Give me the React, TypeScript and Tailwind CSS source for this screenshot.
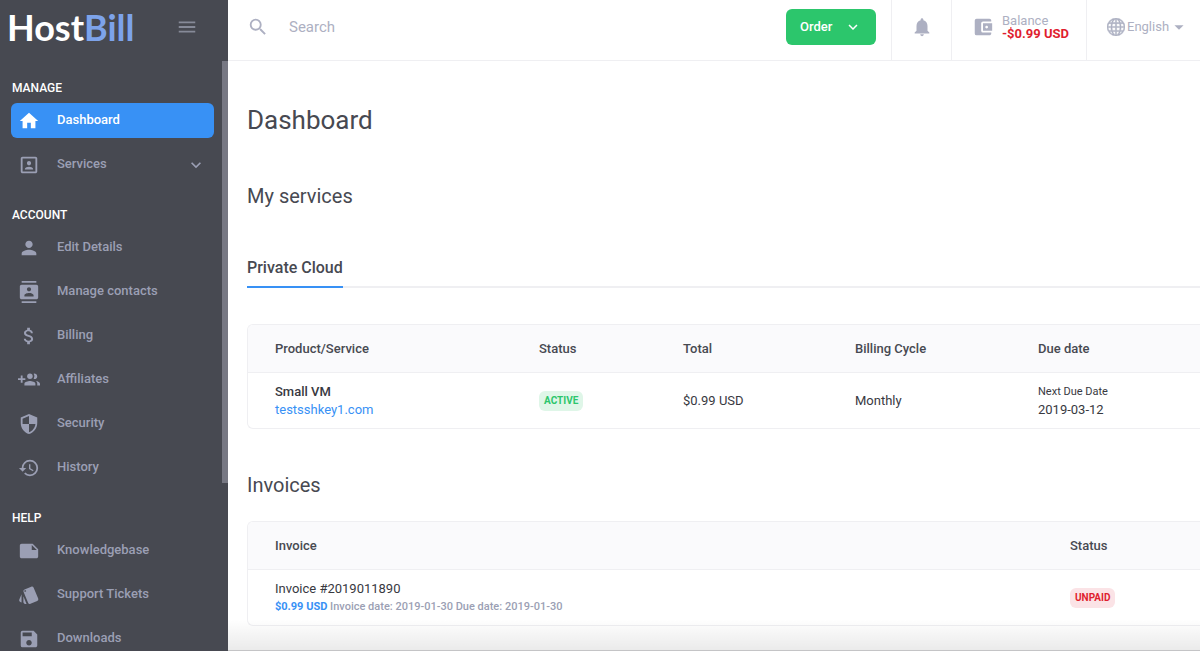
import React from 'react';
import type { IconType } from 'react-icons';
import {
  MdAccountBalanceWallet,
  MdArrowDropDown,
  MdAttachMoney,
  MdContacts,
  MdExpandMore,
  MdHistory,
  MdHome,
  MdMenu,
  MdNote,
  MdNotifications,
  MdPerson,
  MdPortrait,
  MdSave,
  MdSearch,
  MdSecurity,
  MdStyle,
} from 'react-icons/md';
import { BsGlobe } from 'react-icons/bs';

type NavItem = {
  label: string;
  icon: IconType | React.FC<{ className?: string }>;
  active?: boolean;
  expandable?: boolean;
};

// group icon with the plus sign on the left side
const GroupPlus = ({ className }: { className?: string }) => (
  <svg viewBox="0 0 24 24" fill="currentColor" className={className} aria-hidden="true">
    <path d="M8 10H5V7H3v3H0v2h3v3h2v-3h3z" />
    <circle cx="13" cy="8" r="3" />
    <path d="M18 11a3 3 0 1 0-.9-5.86 5 5 0 0 1 0 5.72c.28.09.58.14.9.14z" />
    <path d="M13 13c-2 0-6 1-6 3v2h12v-2c0-2-4-3-6-3z" />
    <path d="M19.62 13.16c.83.73 1.38 1.66 1.38 2.84v2h3v-2c0-1.54-2.37-2.49-4.38-2.84z" />
  </svg>
);

const navGroups: { title: string; items: NavItem[] }[] = [
  {
    title: 'MANAGE',
    items: [
      { label: 'Dashboard', icon: MdHome, active: true },
      { label: 'Services', icon: MdPortrait, expandable: true },
    ],
  },
  {
    title: 'ACCOUNT',
    items: [
      { label: 'Edit Details', icon: MdPerson },
      { label: 'Manage contacts', icon: MdContacts },
      { label: 'Billing', icon: MdAttachMoney },
      { label: 'Affiliates', icon: GroupPlus },
      { label: 'Security', icon: MdSecurity },
      { label: 'History', icon: MdHistory },
    ],
  },
  {
    title: 'HELP',
    items: [
      { label: 'Knowledgebase', icon: MdNote },
      { label: 'Support Tickets', icon: MdStyle },
      { label: 'Downloads', icon: MdSave },
    ],
  },
];

const NavLink = ({ label, icon: Icon, active, expandable }: NavItem) => (
  <a
    href="#"
    className={`flex items-center h-[35px] pl-[7px] pr-2 rounded-md ${active ? 'bg-[#3891f5] text-white' : 'text-[#9b9fb4]'}`}
  >
    <Icon className="w-[22px] h-[22px] shrink-0" />
    <span className="ml-[17px] flex-1 pb-0.5 text-[13px] leading-4 font-medium">{label}</span>
    {expandable && <MdExpandMore className="w-5 h-5" />}
  </a>
);

const Sidebar = () => (
  <aside className="flex flex-col w-[228px] h-screen shrink-0 overflow-hidden bg-[#474951]">
    <div className="flex items-center justify-between h-[61px] shrink-0 pl-[7px] pr-[30px] pb-[7px]">
      <a href="#" className="font-['Lato'] font-bold text-4xl leading-none text-white">
        Host<span className="text-[#7da3ea]">Bill</span>
      </a>
      <button type="button" aria-label="Toggle menu" className="text-[#868a98]">
        <MdMenu className="w-[22px] h-[22px]" />
      </button>
    </div>
    <div className="flex flex-1 min-h-0">
      <nav className="flex-1 pl-[11px] pr-2 pt-[19px] flex flex-col gap-[25px]">
        {navGroups.map((group) => (
          <div key={group.title}>
            <h2 className="mb-[7px] pl-px text-xs leading-4 font-medium text-white">{group.title}</h2>
            <ul className="flex flex-col gap-[9px]">
              {group.items.map((item) => (
                <li key={item.label}>
                  <NavLink {...item} />
                </li>
              ))}
            </ul>
          </div>
        ))}
      </nav>
      {/* scroll thumb */}
      <div className="w-1.5 h-[422px] bg-[#777883]" />
    </div>
  </aside>
);

const TopBar = () => (
  <header className="flex h-[61px] border-b border-[#efeff2] text-[#adb0c2]">
    <label className="flex flex-1 items-center gap-5 pl-[19px] pb-[7px]">
      <MdSearch className="w-[22px] h-[22px] shrink-0" />
      <input
        type="text"
        aria-label="Search"
        placeholder="Search"
        className="w-full text-[15px] leading-5 outline-none placeholder:text-[#adb0c2]"
      />
    </label>
    <div className="pt-[9px] pr-[15px]">
      <button
        type="button"
        className="flex items-center justify-between w-[90px] h-9 pl-3.5 pr-3.5 rounded-md bg-[#2cc66c] text-[13px] font-medium text-white"
      >
        Order
        <MdExpandMore className="w-[18px] h-[18px]" />
      </button>
    </div>
    <button type="button" aria-label="Notifications" className="flex items-center justify-center w-[60px] pb-[7px] border-l border-[#efeff2]">
      <MdNotifications className="w-[22px] h-[22px]" />
    </button>
    <a href="#" className="flex items-center gap-2 w-[135px] pl-5 pb-[7px] border-l border-[#efeff2]">
      <MdAccountBalanceWallet className="w-[22px] h-[22px]" />
      <span className="flex flex-col text-[13px] leading-[13px]">
        Balance
        <span className="font-bold text-[#e01e2f]">-$0.99 USD</span>
      </span>
    </a>
    <div className="flex items-center w-[114px] pl-5 pb-[7px] border-l border-[#efeff2]">
      <BsGlobe className="w-[18px] h-[18px] shrink-0 stroke-current [stroke-width:0.4]" />
      <div className="relative flex flex-1 items-center">
        <select aria-label="Language" className="w-full pl-0.5 pr-6 appearance-none bg-transparent text-[13px] leading-4 outline-none">
          <option>English</option>
        </select>
        <MdArrowDropDown className="absolute right-2.5 w-[22px] h-[22px] pointer-events-none" />
      </div>
    </div>
  </header>
);

const cardClass = 'border border-r-0 border-[#efeff2] rounded-l-md overflow-hidden';
const tableClass = 'w-full table-fixed border-separate border-spacing-0 text-[13px] leading-[18px] text-[#38393f]';
const headClass = 'h-12 bg-[#fafafc] border-b border-[#efeff2] text-left font-medium text-[#474951]';

const ServicesTable = () => (
  <div className={cardClass}>
    <table className={tableClass}>
      <thead>
        <tr>
          <th className={`${headClass} pl-[27px] w-[291px]`}>Product/Service</th>
          <th className={`${headClass} w-36`}>Status</th>
          <th className={`${headClass} w-[172px]`}>Total</th>
          <th className={`${headClass} w-[183px]`}>Billing Cycle</th>
          <th className={headClass}>Due date</th>
        </tr>
      </thead>
      <tbody>
        <tr>
          <td className="h-[55px] pl-[27px]">
            <div className="font-medium">Small VM</div>
            <a href="#" className="text-[#3891f5]">testsshkey1.com</a>
          </td>
          <td>
            <span className="inline-block px-[5px] rounded-md bg-[#dff6e8] text-[10px] leading-5 font-bold text-[#2cc66c]">ACTIVE</span>
          </td>
          <td>$0.99 USD</td>
          <td>Monthly</td>
          <td>
            <div className="text-[11px]">Next Due Date</div>
            <div>2019-03-12</div>
          </td>
        </tr>
      </tbody>
    </table>
  </div>
);

const InvoicesTable = () => (
  <div className={cardClass}>
    <table className={tableClass}>
      <thead>
        <tr>
          <th className={`${headClass} pl-[27px]`}>Invoice</th>
          <th className={`${headClass} w-[130px]`}>Status</th>
        </tr>
      </thead>
      <tbody>
        <tr>
          <td className="h-[55px] pl-[27px]">
            <div>Invoice #2019011890</div>
            <div className="text-[11px] font-medium text-[#9b9fb4]">
              <span className="font-bold text-[#3891f5]">$0.99 USD</span> Invoice date: 2019-01-30 Due date: 2019-01-30
            </div>
          </td>
          <td>
            <span className="inline-block px-[5px] rounded-md bg-[#fbe3e6] text-[10px] leading-5 font-bold text-[#e01e2f]">UNPAID</span>
          </td>
        </tr>
      </tbody>
    </table>
  </div>
);

export default function App() {
  return (
    <div className="relative flex h-screen overflow-hidden bg-white font-['Roboto',sans-serif]">
      <Sidebar />
      <div className="flex-1 min-w-0">
        <TopBar />
        <main className="pl-[19px] text-[#474951]">
          <h1 className="pt-[43px] text-[26px] leading-8">Dashboard</h1>
          <h2 className="mt-12 text-xl leading-6">My services</h2>
          <div className="flex mt-10 border-b-2 border-[#efeff2]">
            <a href="#" className="-mb-0.5 h-10 border-b-2 border-[#3891f5] text-base leading-10 font-medium">
              Private Cloud
            </a>
          </div>
          <div className="mt-9">
            <ServicesTable />
          </div>
          <h2 className="mt-11 mb-6 text-xl leading-6">Invoices</h2>
          <InvoicesTable />
        </main>
      </div>
      {/* fade above the bottom edge */}
      <div className="absolute bottom-0 right-0 left-[228px] h-8 bg-linear-to-b from-transparent to-black/8 border-b border-[#c4c4c6] pointer-events-none" />
    </div>
  );
}
